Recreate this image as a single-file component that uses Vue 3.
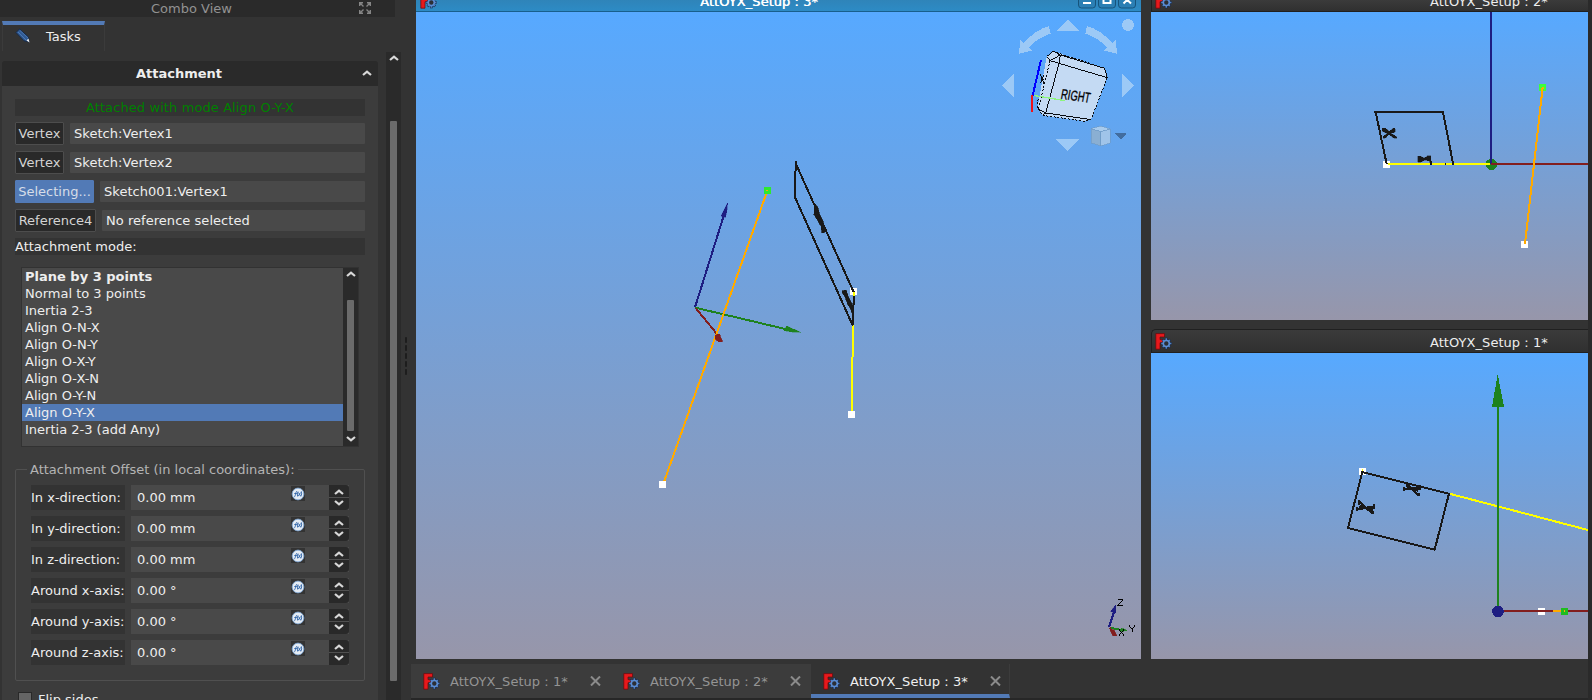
<script setup>
const refs = [
  { label: 'Vertex', value: 'Sketch:Vertex1', w: 49 },
  { label: 'Vertex', value: 'Sketch:Vertex2', w: 49 },
  { label: 'Selecting...', value: 'Sketch001:Vertex1', w: 79, active: true },
  { label: 'Reference4', value: 'No reference selected', w: 81 },
]
const modes = [
  'Plane by 3 points', 'Normal to 3 points', 'Inertia 2-3', 'Align O-N-X', 'Align O-N-Y',
  'Align O-X-Y', 'Align O-X-N', 'Align O-Y-N', 'Align O-Y-X', 'Inertia 2-3 (add Any)',
]
const offsets = [
  ['In x-direction:', '0.00 mm'], ['In y-direction:', '0.00 mm'], ['In z-direction:', '0.00 mm'],
  ['Around x-axis:', '0.00 °'], ['Around y-axis:', '0.00 °'], ['Around z-axis:', '0.00 °'],
]
const tabs = ['AttOYX_Setup : 1*', 'AttOYX_Setup : 2*', 'AttOYX_Setup : 3*']
</script>

<template>
  <div class="app">
    <svg width="0" height="0" class="defs">
      <symbol id="doc" viewBox="0 0 17 17">
        <path d="M.8 .6H9.500V4H5V6.600H8V9.800H5V16.200H.8Z" fill="#e8191c" stroke="#65090b" stroke-width=".7" />
        <path d="M11.300 4.800v11.400M5.900 10.500h10.800M7.500 6.700l7.600 7.600M15.100 6.700l-7.600 7.600" stroke="#152a4c" stroke-width="2.600" />
        <path d="M11.300 5.300v10.400M6.200 10.500h10.200M7.800 7l7 7M14.800 7l-7 7" stroke="#527fc0" stroke-width="1.500" />
        <circle cx="11.300" cy="10.500" r="3" fill="#2c2f35" stroke="#5b8dd4" stroke-width="1.600" />
      </symbol>
      <symbol id="up" viewBox="0 0 10 6"><path d="M1 5 5 1.600 9 5" fill="none" stroke="#d8d8d8" stroke-width="2.200" /></symbol>
      <symbol id="down" viewBox="0 0 10 6"><path d="M1 1 5 4.400 9 1" fill="none" stroke="#d8d8d8" stroke-width="2.200" /></symbol>
    </svg>

    <aside class="dock">
      <header class="dock-title">
        <span>Combo View</span>
        <svg class="expand" width="12" height="12" viewBox="0 0 12 12" fill="none" stroke="#858585" stroke-width="1.400">
          <path d="M.7 4V.7H4M8 .7h3.300V4M11.300 8v3.300H8M4 11.300H.7V8M1 1l3.500 3.500M11 1 7.500 4.500M11 11 7.500 7.500M1 11l3.500-3.500" />
        </svg>
      </header>
      <div class="task-tab">
        <svg width="17" height="17" viewBox="0 0 17 17">
          <path d="M1 4.500 4.500 1 13.500 9 14 14 9 12.800Z" fill="#315a92" stroke="#172a47" />
          <path d="M3 4 11 12M5 2.500 13 10" stroke="#4f7fbd" stroke-width=".8" />
          <path d="m11.500 12.500 2-2 1 4Z" fill="#eee" />
        </svg>
        <span>Tasks</span>
      </div>
      <div class="dock-body">
        <section class="panel">
          <div class="panel-title"><span>Attachment</span><svg width="10" height="6"><use href="#up" /></svg></div>
          <div class="panel-body">
            <div class="status">Attached with mode Align O-Y-X</div>
            <div v-for="(r, i) in refs" :key="i" class="ref">
              <div class="btn" :class="{ on: r.active }" :style="{ width: r.w + 'px' }">{{ r.label }}</div>
              <div class="field">{{ r.value }}</div>
            </div>
            <div class="mode-label">Attachment mode:</div>
            <div class="list">
              <div class="items">
                <div v-for="(m, i) in modes" :key="m" class="item" :class="{ bold: i === 0, sel: i === 8 }">{{ m }}</div>
              </div>
              <div class="lbar">
                <svg width="10" height="6"><use href="#up" /></svg>
                <i></i>
                <svg width="10" height="6"><use href="#down" /></svg>
              </div>
            </div>
            <div class="group">
              <div class="legend">Attachment Offset (in local coordinates):</div>
              <div v-for="o in offsets" :key="o[0]" class="off">
                <div class="olabel">{{ o[0] }}</div>
                <div class="ofield">
                  <span>{{ o[1] }}</span>
                  <div class="fx">
                    <svg width="14" height="15" viewBox="0 0 14 15">
                      <circle cx="7" cy="8" r="5.900" fill="#e5ecf4" stroke="#7fa6d2" stroke-width=".9" />
                      <path d="M3.200 10.800C4.600 11 4.400 5.500 6 5.200M3.300 7.500h2.500M7 5.500Q5.700 8 6.700 10.500M7.500 6.500l2 3.500M9.600 6.500 7.300 10M10.300 5.300Q11.300 8 9.800 10.500" fill="none" stroke="#2b61a6" stroke-width=".9" />
                    </svg>
                  </div>
                </div>
                <div class="spin">
                  <b><svg width="10" height="6"><use href="#up" /></svg></b>
                  <b><svg width="10" height="6"><use href="#down" /></svg></b>
                </div>
              </div>
            </div>
            <div class="flip"><i></i><span>Flip sides</span></div>
          </div>
        </section>
        <div class="vbar"><svg width="10" height="6"><use href="#up" /></svg><i></i></div>
      </div>
    </aside>

    <div class="splitter"><i v-for="n in 5" :key="n"></i></div>

    <main class="mdi">
      <div class="windows">
        <section class="win main-win">
          <div class="title active">
            <svg class="ticon" width="17" height="17"><use href="#doc" /></svg>
            <span>AttOYX_Setup : 3*</span>
            <svg class="wbtns" width="60" height="10" viewBox="0 0 60 10">
              <g fill="#2b7fb4" stroke="#16547c"><rect x=".5" y="-8.500" width="17" height="16.500" rx="3" /><rect x="20.500" y="-8.500" width="17" height="16.500" rx="3" /><rect x="40.500" y="-8.500" width="17" height="16.500" rx="3" /></g>
              <path d="M5 3h8M25.500-4v7h7v-7M45.500 3.500l7.500-7.500M53 3.500l-7.500-7.500" stroke="#fff" stroke-width="2" fill="none" />
            </svg>
          </div>
          <svg class="view" width="725" height="647" viewBox="416 12 725 647" shape-rendering="crispEdges" fill="none">
            <!-- scene -->
            <g transform="translate(640 140) scale(.33333)" stroke-width="6">
              <path d="M165 502 255 215" stroke="#1e1e82" />
              <path d="M263 189 244 227 248 233 257 231 262 205Z" fill="#1e1e82" stroke="#1e1e82" stroke-width="1" />
              <path d="M166 503 440 568" stroke="#1e821e" />
              <path d="M483 577 440 558 433 572 460 577Z" fill="#1e821e" stroke="#1e821e" stroke-width="1" />
              <path d="M166 503 236 588" stroke="#821e1e" />
              <path d="M382 152 69 1034" stroke="#ffaa00" />
              <path d="M226 586 238 582 248 604 236 606 225 596Z" fill="#821e1e" stroke="#821e1e" stroke-width="2" />
              <rect x="371" y="141" width="22" height="21" fill="#2ee92e" /><rect x="377" y="150" width="7" height="4" fill="#ffaa00" />
              <path d="M639 556 635 823" stroke="#ff0" />
              <rect x="58" y="1023" width="21" height="21" fill="#fff" />
              <rect x="624" y="813" width="21" height="21" fill="#fff" />
              <rect x="630" y="444" width="21" height="21" fill="#fff" />
              <path d="M641 456 467 70 465 172 638 556 642 460" stroke="#191919" stroke-linejoin="bevel" />
              <path d="M468 64v20" stroke="#191919" />
              <path d="M641 456v11" stroke="#ff0" />
              <path d="M524 190 534 203 539 224 550 245 555 270 553 278 546 278 543 259 533 241 522 224Z" fill="#191919" stroke="#191919" stroke-width="2" />
              <path d="M606 453 618 450 627 475 637 492 637 520 630 505 622 490 615 470 608 460Z" fill="#191919" stroke="#191919" stroke-width="2" />
            </g>
            <!-- navigation cube -->
            <g transform="translate(990 0) scale(.33333)">
              <g fill="#9cc9f6">
                <path d="M234 60 268 93H201ZM71 222V291L36 257ZM397 222V291L432 257ZM197 417H270L234 453Z" />
                <circle cx="414" cy="75" r="18" />
                <path d="M177 79 182 101Q141 114 117 143L125 152 87 161 91 118 101 130Q137 88 177 79ZM291 79 286 101Q327 114 351 143L343 152 381 161 377 118 367 130Q331 88 291 79Z" />
              </g>
              <path d="M170 170 190 154 344 205 352 233 304 356 285 364 158 346 142 324Z" fill="#c4daf3" />
              <g stroke="#080b10" stroke-width="3">
                <path d="M190 154 344 205M352 233 304 356 285 364 158 346 142 324 145 290M180 182 145 328" stroke-dasharray="6 5" />
                <path d="M170 170 190 154 211 165 344 205 352 233 207 190 180 182 170 170M180 182 211 165 207 190 167 339 298 358M145 328 167 339 158 346" />
                <path d="M151 250l10-25M150 221l12 30M154 238l8 2" />
              </g>
              <path d="M128 286 226 302" stroke="#8df57d" stroke-width="4" />
              <path d="M153 180 128 286" stroke="#00f" stroke-width="6" />
              <path d="M126 284V335" stroke="#f01218" stroke-width="6" />
              <text transform="translate(211 296) rotate(8) scale(.66 1) skewX(-4)" font-family="Liberation Sans, sans-serif" font-size="43" fill="#000" stroke="#000" stroke-width="1">RIGHT</text>
              <g stroke="#6e9bc8" stroke-width="2"><path d="M303 386 332 378 361 387 333 395Z" fill="#a8cbed" /><path d="M303 386 333 395V438L304 429Z" fill="#8aafd3" /><path d="M333 395 361 387V429L333 438Z" fill="#a0c4e9" /></g>
              <path d="M375 399H411L393 418Z" fill="#426d9f" />
            </g>
            <!-- axis cross -->
            <g transform="translate(1060 580) scale(.33333)" stroke-width="6">
              <path d="M147 141 163 93" stroke="#1e1e82" /><path d="M167 74 152 95 167 99Z" fill="#1e1e82" stroke="#1e1e82" stroke-width="1" />
              <path d="M149 143 185 150" stroke="#1e821e" /><path d="M202 152 184 144 180 154Z" fill="#1e821e" stroke="#1e821e" stroke-width="2" />
              <path d="M149 144 156 153" stroke="#821e1e" /><path d="M150 150 162 150 170 167 159 167Z" fill="#821e1e" stroke="#821e1e" stroke-width="2" />
              <path d="M174 59H188V62L174 76V78H189M210 136v4l7 7v9M224 136v4l-7 7M178 147v4l12 12v4M192 147v4l-14 12v4" stroke="#000" stroke-width="3" />
            </g>
          </svg>
        </section>
        <div class="right-col">
          <section class="win">
            <div class="title short">
              <svg class="ticon" width="17" height="17"><use href="#doc" /></svg>
              <span>AttOYX_Setup : 2*</span>
            </div>
            <svg class="view" width="437" height="308" viewBox="1151 12 437 308" shape-rendering="crispEdges" fill="none">
              <g transform="translate(1330 60) scale(.33333)" stroke-width="6">
                <circle cx="484" cy="313" r="17" fill="#1e821e" />
                <path d="M483-144V312" stroke="#1e1e82" /><path d="M483 312H774" stroke="#821e1e" />
                <rect x="159" y="303" width="21" height="21" fill="#fff" />
                <rect x="627" y="72" width="21" height="21" fill="#3cff3c" />
                <rect x="573" y="543" width="21" height="21" fill="#fff" />
                <path d="M638 82 585 552" stroke="#ffaa00" />
                <path d="M170 312 137 156M132 156H339L370 315" stroke="#191919" />
                <path d="M157 205H166L178 214 190 204 196 206V216L183 220 201 231V235H192L176 223 166 235H160V229L172 220 157 214ZM264 289H272L283 294 294 287H303V303L306 315H300V304L284 300 271 307H264Z" fill="#191919" stroke="#191919" stroke-width="1" />
                <path d="M173 312H480" stroke="#ff0" /><path d="M346 309v6" stroke="#191919" stroke-width="3" />
                <path d="M303 303v12M369 306v9" stroke="#191919" stroke-width="4" />
              </g>
            </svg>
          </section>
          <section class="win second">
            <div class="title">
              <svg class="ticon" width="17" height="17"><use href="#doc" /></svg>
              <span>AttOYX_Setup : 1*</span>
            </div>
            <svg class="view" width="437" height="306" viewBox="1151 353 437 306" shape-rendering="crispEdges" fill="none">
              <g transform="translate(1330 450) scale(.33333)" stroke-width="6">
                <rect x="87" y="54" width="21" height="21" fill="#fff" /><path d="M97 58v8" stroke="#ff0" stroke-width="4" />
                <path d="M358 131 774 240" stroke="#ff0" />
                <path d="M97 66 357 131 314 299 54 234Z" stroke="#191919" />
                <path d="M81 178 134 169M88 155 126 189M82 170V182M133 162V176M88 151V166M128 182V193M220 118 272 112M228 99 266 136M222 110V124M271 106V120M231 98V110M266 128V139" stroke="#191919" stroke-width="7" />
                <path d="M90 163 108 172 86 177ZM233 108 246 115 228 119ZM130 166 110 172 128 187ZM270 110 250 116 263 127Z" fill="#191919" />
                <path d="M504-132V470" stroke="#1e821e" />
                <path d="M503-228 522-129H486Z" fill="#1e821e" />
                <path d="M520 483H774" stroke="#821e1e" />
                <rect x="624" y="474" width="21" height="21" fill="#fff" /><path d="M624 483h21" stroke="#821e1e" />
                <path d="M669 483h25" stroke="#ffaa00" />
                <rect x="693" y="474" width="21" height="21" fill="#1fbd1f" /><path d="M703 480v6" stroke="#ffaa00" stroke-width="4" />
                <circle cx="504" cy="484" r="17.500" fill="#1e1e82" />
              </g>
            </svg>
          </section>
        </div>
      </div>
      <nav class="tabs">
        <div v-for="(t, i) in tabs" :key="t" class="tab" :class="{ current: i === 2 }">
          <svg width="17" height="17"><use href="#doc" /></svg>
          <span>{{ t }}</span>
          <svg class="x" width="11" height="10" viewBox="0 0 11 10"><path d="M1 .5l9 9M10 .5l-9 9" stroke="#8b8b8b" stroke-width="2" /></svg>
        </div>
      </nav>
    </main>
    <div class="edge"></div>
  </div>
</template>

<style>
body { background: #333; overflow: hidden; }
</style>

<style scoped>
.app { width: 1592px; height: 700px; display: flex; overflow: hidden; background: #333; color: #eee; font: 13px/17px "DejaVu Sans", sans-serif; white-space: nowrap; }
.app * { box-sizing: border-box; }
.app svg { display: block; flex: none; }
.defs { position: absolute; }
.dock { width: 401px; height: 700px; display: flex; flex-direction: column; flex: none; }
.dock-title { height: 17px; width: 395px; background: #2a2a2a; color: #929292; display: flex; justify-content: flex-end; align-items: center; padding: 0 24px 1px 0; }
.dock-title span { width: 81px; margin-right: 127px; }
.task-tab { width: 103px; height: 30px; margin: 4px 0 0 2px; border: 1px solid #3b3b3b; border-top: 4px solid #527ab6; border-bottom: 0; display: flex; align-items: center; padding: 0 0 3px 12px; gap: 14px; }
.task-tab svg { margin-top: -1px; }
.dock-body { flex: 1; display: flex; min-height: 0; margin-top: 1px; }
.panel { width: 376px; margin: 9px 0 0 2px; height: 640px; }
.panel-title { height: 25px; background: #2a2a2a; border-radius: 3px 3px 0 0; display: flex; align-items: center; justify-content: flex-end; font-weight: bold; padding: 0 6px 1px 0; }
.panel-title span { width: 87px; margin-right: 139px; }
.panel-body { height: 614px; background: #3c3c3c; padding: 13px 13px 0; overflow: hidden; }
.status { height: 17px; background: #333; color: #008000; text-align: center; margin-bottom: 6px; letter-spacing: .1px; }
.ref { display: flex; height: 23px; margin-bottom: 6px; align-items: center; gap: 6px; }
.btn { height: 23px; border: 1px solid #4d4d4d; background: #292929; color: #d4d4d4; text-align: center; line-height: 21px; border-radius: 1px; }
.btn.on { background: #527ab6; border-color: #527ab6; color: #d6dde8; }
.field { flex: 1; height: 21px; background: #494949; line-height: 21px; padding-left: 4px; border-radius: 1px; letter-spacing: .04px; }
.mode-label { height: 17px; background: #333; }
.list { height: 180px; width: 338px; margin: 12px 0 0 6px; border: 1px solid #323232; display: flex; background: #494949; }
.items { flex: 1; }
.item { height: 17px; padding-left: 3px; }
.bold { font-weight: bold; }
.sel { background: #527ab6; }
.lbar { width: 15px; background: #2a2a2a; display: flex; flex-direction: column; align-items: center; padding: 3px 0; }
.lbar i { width: 7px; height: 131px; margin: 23px 0 5px; background: #6b6b6b; border-radius: 1px; }
.group { width: 350px; height: 212px; margin-top: 22px; border: 1px solid #505050; padding: 15px 15px 0; position: relative; border-radius: 2px; }
.legend { position: absolute; left: 11px; top: -9px; padding: 0 3px; background: #3c3c3c; color: #b4b4b4; }
.off { display: flex; height: 25px; margin-bottom: 6px; }
.olabel { width: 94px; background: #333; line-height: 25px; }
.ofield { width: 198px; margin-left: 6px; background: #494949; line-height: 25px; display: flex; justify-content: space-between; padding: 0 24px 0 6px; }
.fx { width: 14px; height: 15px; margin-top: 1px; background: #333; }
.spin { width: 20px; background: #505050; display: flex; flex-direction: column; gap: 1px; }
.spin b { flex: 1; background: #292929; display: flex; align-items: center; justify-content: center; }
.spin b:first-child { border-radius: 0 3px 0 0; padding-top: 2px; }
.spin b:last-child { border-radius: 0 0 3px 0; padding-bottom: 2px; }
.flip { display: flex; margin: 11px 0 0 3px; gap: 6px; }
.flip i { width: 14px; height: 14px; background: #656565; border: 1px solid #292929; }
.flip span { margin-top: -1px; }
.vbar { width: 15px; margin-left: 8px; background: #2a2a2a; display: flex; flex-direction: column; align-items: center; padding-top: 3px; }
.vbar i { width: 7px; height: 560px; margin-top: 60px; background: #6b6b6b; border-radius: 1px; }
.splitter { width: 10px; flex: none; padding: 337px 0 0 4px; display: flex; flex-direction: column; gap: 2px; }
.splitter i { width: 2px; height: 6px; background: #1d1d1d; border-radius: 1px; }
.mdi { width: 1177px; display: flex; flex-direction: column; flex: none; }
.windows { display: flex; height: 664px; padding-left: 5px; gap: 10px; }
.win { display: flex; flex-direction: column; }
.title { height: 24px; border: 1px solid #202020; border-right: 0; border-radius: 5px 0 0; background: linear-gradient(#3b3b3b, #303030); display: flex; align-items: center; padding-left: 3px; }
.title span { margin-left: 258px; padding-top: 2px; letter-spacing: .05px; }
.title.active { height: 12px; border-radius: 0; border: 0; border-bottom: 1px solid #185f8c; background: linear-gradient(#2f84b9, #2d8bc5); overflow: hidden; align-items: flex-end; padding-left: 4px; }
.title.active span { margin-left: 263px; padding: 0; height: 18px; color: #fff; text-shadow: .5px 0 0 #f4f8fb; }
.title.active .ticon { margin-bottom: 2px; }
.wbtns { margin: 0 3px 1px auto; }
.title.short { height: 12px; border-top: 0; border-radius: 0; overflow: hidden; align-items: flex-end; }
.title.short span { height: 18px; padding: 0; }
.title.short .ticon { margin-bottom: 2px; }
.second { margin-top: 9px; }
.view { background: linear-gradient(#57a9ff, #9796aa); }
.tabs { height: 36px; display: flex; border-bottom: 2px solid #272727; }
.tab { width: 200px; height: 34px; background: #3c3c3c; color: #949494; display: flex; align-items: center; padding-left: 12px; }
.tab span { margin-left: 10px; width: 140px; letter-spacing: .05px; }
.tab.current { background: #333; color: #f0f0f0; width: 199px; border-bottom: 4px solid #527ab6; padding-top: 4px; border-right: 1px solid #3c3c3c; }
.edge { width: 4px; background: #2a2a2a; }
</style>
